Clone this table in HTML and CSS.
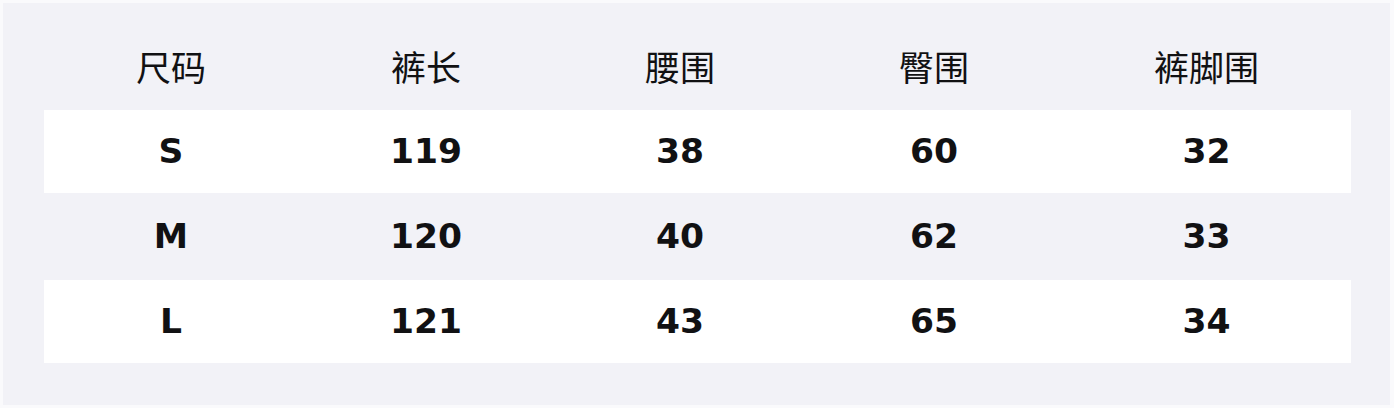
FILE: index.html
```html
<!DOCTYPE html>
<html lang="zh">
<head>
<meta charset="utf-8">
<link rel="stylesheet" href="styles.css">
</head>
<body>
<div class="panel">
  <div class="row head">
    <div class="cell">尺码</div>
    <div class="cell">裤长</div>
    <div class="cell">腰围</div>
    <div class="cell">臀围</div>
    <div class="cell">裤脚围</div>
  </div>
  <div class="row white">
    <div class="cell">S</div>
    <div class="cell">119</div>
    <div class="cell">38</div>
    <div class="cell">60</div>
    <div class="cell">32</div>
  </div>
  <div class="row">
    <div class="cell">M</div>
    <div class="cell">120</div>
    <div class="cell">40</div>
    <div class="cell">62</div>
    <div class="cell">33</div>
  </div>
  <div class="row white">
    <div class="cell">L</div>
    <div class="cell">121</div>
    <div class="cell">43</div>
    <div class="cell">65</div>
    <div class="cell">34</div>
  </div>
</div>
</body>
</html>
```

FILE: styles.css
```css
html, body {
  margin: 0;
  padding: 0;
  background: #fafafc;
}
body {
  width: 1394px;
  height: 408px;
  overflow: hidden;
}
.panel {
  margin: 3px;
  width: 1387px;
  height: 402px;
  box-sizing: border-box;
  padding: 22px 39px 0 41px;
  background: #f2f2f7;
  color: #111113;
  font-family: "DejaVu Sans", "Noto Sans CJK SC", sans-serif;
}
.row {
  display: grid;
  grid-template-columns: 254px 256px 252px 256px 1fr;
  height: 83px;
  border-bottom: 2px solid #f2f2f7;
  align-items: center;
}
.row.white {
  background: #ffffff;
}
.cell {
  text-align: center;
  font-size: 34.5px;
  font-weight: bold;
  line-height: 1;
}
.head .cell {
  font-weight: normal;
  font-size: 35px;
  padding-bottom: 3px;
  font-family: "Noto Sans CJK SC", sans-serif;
}
```
